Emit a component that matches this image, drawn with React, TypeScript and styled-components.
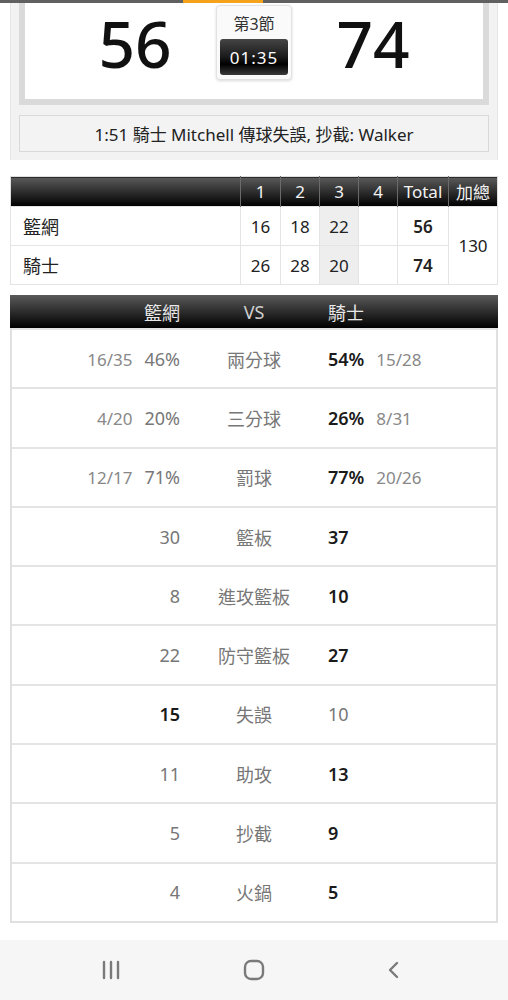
import styled, { createGlobalStyle } from 'styled-components'

const GlobalStyle = createGlobalStyle`
  html, body {
    margin: 0;
    padding: 0;
    background: #ffffff;
  }
  body {
    font-family: 'Noto Sans', 'Noto Sans CJK TC', sans-serif;
    color: #222;
  }
  * { box-sizing: border-box; }
`

const Page = styled.div`
  width: 508px;
  height: 1000px;
  display: flex;
  flex-direction: column;
  overflow: hidden;
`

const ProgressBar = styled.div`
  height: 3px;
  display: flex;
  background: #606060;
`

const ProgressFill = styled.div<{ $width: number; $color: string }>`
  width: ${p => p.$width}px;
  background: ${p => p.$color};
`

const ScorePanel = styled.div`
  margin: 0 10px;
  padding: 0 8px 8px;
  background: #f2f2f2;
  border-left: 1px solid #e6e6e6;
  border-right: 1px solid #e6e6e6;
`

const Scoreboard = styled.div`
  height: 102px;
  background: #fff;
  border: 6px solid #dadada;
  border-top: none;
  display: flex;
  justify-content: center;
  align-items: flex-start;
  gap: 44px;
`

const Score = styled.div`
  font-size: 64px;
  font-weight: 500;
  line-height: 1;
  margin-top: 9px;
  width: 74px;
  text-align: center;
  color: #111;
`

const PeriodBox = styled.div`
  width: 76px;
  height: 75px;
  margin-top: 2px;
  padding: 3px 4px 0;
  background: #fafafa;
  border: 1px solid #e2e2e2;
  border-radius: 4px;
  box-shadow: 0 1px 3px rgba(0, 0, 0, 0.15);
  display: flex;
  flex-direction: column;
  align-items: center;
`

const PeriodLabel = styled.div`
  font-size: 16px;
  line-height: 30px;
  color: #333;
`

const Clock = styled.div`
  width: 68px;
  height: 36px;
  border-radius: 3px;
  background: linear-gradient(#454545 0%, #1a1a1a 50%, #000 70%, #3a3a3a 100%);
  color: #fff;
  font-size: 17px;
  letter-spacing: 1px;
  display: flex;
  align-items: center;
  justify-content: center;
`

const PlayBar = styled.div`
  margin-top: 10px;
  height: 37px;
  border: 1px solid #d9d9d9;
  background: #f3f3f3;
  font-size: 17px;
  color: #222;
  display: flex;
  align-items: center;
  justify-content: center;
`

const QuarterTable = styled.table`
  margin: 16px 10px 0;
  width: 488px;
  border-collapse: collapse;
  table-layout: fixed;
  border: 1px solid #dedede;
`

const HeadCell = styled.th<{ $w?: number }>`
  width: ${p => (p.$w ? `${p.$w}px` : 'auto')};
  height: 30px;
  padding: 0;
  background: linear-gradient(#5a5a5a, #000);
  color: #f2f2f2;
  font-size: 17px;
  font-weight: 400;
  text-align: center;
  border-left: 1px solid #6a6a6a;
  &:first-child { border-left: none; }
`

const Cell = styled.td<{ $hl?: boolean; $bold?: boolean }>`
  height: 39px;
  padding: 0;
  text-align: center;
  font-size: 17px;
  font-weight: ${p => (p.$bold ? 600 : 400)};
  background: ${p => (p.$hl ? '#eeeeee' : '#fff')};
  border: 1px solid #e4e4e4;
  color: #222;
`

const NameCell = styled(Cell)`
  text-align: left;
  padding-left: 12px;
  font-size: 18px;
`

const StatsTable = styled.div`
  margin: 10px 10px 0;
  width: 488px;
  border: 2px solid #e0e0e0;
  border-top: none;
`

const StatsHeader = styled.div`
  height: 33px;
  background: linear-gradient(#5a5a5a, #000);
  color: #e8e8e8;
  font-size: 18px;
  display: grid;
  grid-template-columns: 168px 148px 168px;
  align-items: center;
  margin: 0 -2px;
  padding: 0 2px;
`

const Row = styled.div`
  height: 59.3px;
  display: grid;
  grid-template-columns: 168px 148px 168px;
  align-items: center;
  border-top: 2px solid #e4e4e4;
  &:first-of-type { border-top: none; }
`

const Side = styled.div<{ $right?: boolean }>`
  display: flex;
  align-items: baseline;
  justify-content: ${p => (p.$right ? 'flex-start' : 'flex-end')};
  gap: 12px;
`

const Mid = styled.div<{ $dim?: boolean }>`
  text-align: center;
  font-size: 18px;
  color: ${p => (p.$dim ? '#cfcfcf' : '#777')};
`

const Value = styled.span<{ $bold?: boolean }>`
  font-size: 18px;
  font-weight: ${p => (p.$bold ? 600 : 400)};
  color: ${p => (p.$bold ? '#1a1a1a' : '#777')};
`

const Frac = styled.span`
  font-size: 17px;
  color: #888;
`

const NavBar = styled.div`
  margin-top: auto;
  height: 60px;
  background: #f6f6f6;
  display: flex;
  justify-content: center;
  align-items: center;
  gap: 122px;
  padding-right: 6px;
  color: #7a7a7a;
`

type Stat = {
  label: string
  left: string
  right: string
  leftFrac?: string
  rightFrac?: string
  bold: 'left' | 'right'
}

const stats: Stat[] = [
  { label: '兩分球', left: '46%', leftFrac: '16/35', right: '54%', rightFrac: '15/28', bold: 'right' },
  { label: '三分球', left: '20%', leftFrac: '4/20', right: '26%', rightFrac: '8/31', bold: 'right' },
  { label: '罰球', left: '71%', leftFrac: '12/17', right: '77%', rightFrac: '20/26', bold: 'right' },
  { label: '籃板', left: '30', right: '37', bold: 'right' },
  { label: '進攻籃板', left: '8', right: '10', bold: 'right' },
  { label: '防守籃板', left: '22', right: '27', bold: 'right' },
  { label: '失誤', left: '15', right: '10', bold: 'left' },
  { label: '助攻', left: '11', right: '13', bold: 'right' },
  { label: '抄截', left: '5', right: '9', bold: 'right' },
  { label: '火鍋', left: '4', right: '5', bold: 'right' },
]

const quarters = [
  { name: '籃網', q: ['16', '18', '22', ''], total: '56' },
  { name: '騎士', q: ['26', '28', '20', ''], total: '74' },
]

export default function App() {
  return (
    <Page>
      <GlobalStyle />
      <ProgressBar>
        <ProgressFill $width={183} $color="#606060" />
        <ProgressFill $width={80} $color="#f5a31a" />
      </ProgressBar>

      <ScorePanel>
        <Scoreboard>
          <Score>56</Score>
          <PeriodBox>
            <PeriodLabel>第3節</PeriodLabel>
            <Clock>01:35</Clock>
          </PeriodBox>
          <Score>74</Score>
        </Scoreboard>
        <PlayBar>1:51 騎士 Mitchell 傳球失誤, 抄截: Walker</PlayBar>
      </ScorePanel>

      <QuarterTable>
        <thead>
          <tr>
            <HeadCell />
            <HeadCell $w={40}>1</HeadCell>
            <HeadCell $w={39}>2</HeadCell>
            <HeadCell $w={39}>3</HeadCell>
            <HeadCell $w={39}>4</HeadCell>
            <HeadCell $w={51}>Total</HeadCell>
            <HeadCell $w={49}>加總</HeadCell>
          </tr>
        </thead>
        <tbody>
          {quarters.map((t, i) => (
            <tr key={t.name}>
              <NameCell>{t.name}</NameCell>
              {t.q.map((v, j) => (
                <Cell key={j} $hl={j === 2}>{v}</Cell>
              ))}
              <Cell $bold>{t.total}</Cell>
              {i === 0 && <Cell rowSpan={2}>130</Cell>}
            </tr>
          ))}
        </tbody>
      </QuarterTable>

      <StatsTable>
        <StatsHeader>
          <Side>籃網</Side>
          <Mid $dim>VS</Mid>
          <Side $right>騎士</Side>
        </StatsHeader>
        {stats.map(s => (
          <Row key={s.label}>
            <Side>
              {s.leftFrac && <Frac>{s.leftFrac}</Frac>}
              <Value $bold={s.bold === 'left'}>{s.left}</Value>
            </Side>
            <Mid>{s.label}</Mid>
            <Side $right>
              <Value $bold={s.bold === 'right'}>{s.right}</Value>
              {s.rightFrac && <Frac>{s.rightFrac}</Frac>}
            </Side>
          </Row>
        ))}
      </StatsTable>

      <NavBar>
        <svg width="20" height="20" viewBox="0 0 20 20">
          <g stroke="currentColor" strokeWidth="2.4" strokeLinecap="round">
            <line x1="3" y1="2" x2="3" y2="18" />
            <line x1="10" y1="2" x2="10" y2="18" />
            <line x1="17" y1="2" x2="17" y2="18" />
          </g>
        </svg>
        <svg width="22" height="22" viewBox="0 0 22 22">
          <rect x="2" y="2" width="18" height="18" rx="6" fill="none" stroke="currentColor" strokeWidth="2.4" />
        </svg>
        <svg width="14" height="20" viewBox="0 0 14 20">
          <polyline points="10,3 3,10 10,17" fill="none" stroke="currentColor" strokeWidth="2.4" strokeLinecap="round" strokeLinejoin="round" />
        </svg>
      </NavBar>
    </Page>
  )
}
